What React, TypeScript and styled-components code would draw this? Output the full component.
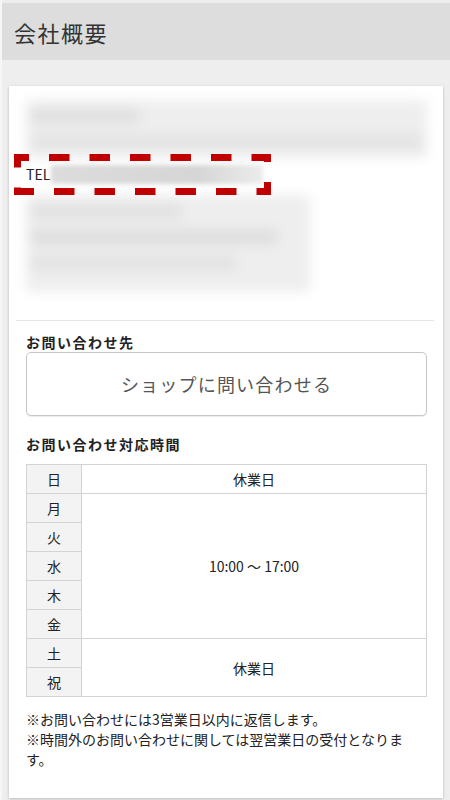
import React from "react";
import styled, { createGlobalStyle } from "styled-components";

const GlobalStyle = createGlobalStyle`
  html, body { margin: 0; padding: 0; background: #eeeeee; }
  body {
    font-family: "Noto Sans CJK JP", "Noto Sans", "Liberation Sans", sans-serif;
    color: #222;
    -webkit-font-smoothing: antialiased;
  }
`;

const Page = styled.div`
  width: 450px;
  min-height: 800px;
  background: #eeeeee;
  padding-top: 3px;
  box-sizing: border-box;
  border-left: 2px solid #f6f6f6;
`;

const Header = styled.header`
  height: 57px;
  background: #dddddd;
  display: flex;
  align-items: center;
  padding-left: 12px;
`;

const Title = styled.h1`
  margin: 0;
  font-size: 22px;
  font-weight: 400;
  letter-spacing: 1.5px;
  color: #333;
`;

const Card = styled.section`
  position: relative;
  margin: 26px 7px 0 7px;
  background: #fff;
  box-shadow: 0 1px 3px rgba(0, 0, 0, 0.22);
  padding: 14px 0 29px;
`;

const Inner = styled.div`
  padding: 0 16px 0 17px;
`;

const BlurBlock = styled.div<{ $h: number; $w?: number; $mt?: number }>`
  height: ${(p) => p.$h}px;
  width: ${(p) => (p.$w ? `${p.$w}px` : "100%")};
  margin-top: ${(p) => p.$mt ?? 0}px;
  background: #eeeeee;
  filter: blur(6px);
  display: flex;
  flex-direction: column;
  gap: 10px;
  padding: 8px 4px;
  box-sizing: border-box;
`;

const BlurBar = styled.div<{ $w: number; $shade: string }>`
  height: 16px;
  width: ${(p) => p.$w}%;
  background: ${(p) => p.$shade};
  border-radius: 6px;
`;

const TelRow = styled.div`
  display: flex;
  align-items: center;
  height: 22px;
  margin-top: 5px;
  font-size: 14px;
  color: #222;
`;

const TelBar = styled.div`
  width: 212px;
  height: 19px;
  margin-left: 1px;
  background: linear-gradient(90deg, #dcdcdc, #d6d6d6 70%, #ececec);
  filter: blur(2px);
`;

const Dashed = styled.svg`
  position: absolute;
  left: 5px;
  top: 68px;
  overflow: visible;
`;

const Divider = styled.hr`
  border: none;
  border-top: 1px solid #e6e6e6;
  margin: 28px 9px 11px 7px;
`;

const Heading = styled.h2`
  margin: 0;
  font-size: 14px;
  line-height: 20px;
  font-weight: 700;
  letter-spacing: 1.5px;
  color: #222;
`;

const ContactButton = styled.button`
  display: block;
  width: 100%;
  height: 64px;
  margin-bottom: 18px;
  background: #fff;
  border: 1px solid #c6c6c6;
  border-radius: 5px;
  box-shadow: 0 1px 1px rgba(0, 0, 0, 0.08);
  font-family: inherit;
  font-size: 18px;
  letter-spacing: 1.2px;
  color: #555;
  cursor: pointer;
`;

const HoursTable = styled.table`
  width: 100%;
  margin-top: 10px;
  border-collapse: collapse;
  font-size: 14px;
  color: #222;
`;

const DayCell = styled.th`
  width: 54px;
  height: 28px;
  padding: 0;
  background: #f3f3f3;
  border: 1px solid #d3d3d3;
  font-weight: 400;
  text-align: center;
`;

const TimeCell = styled.td`
  padding: 0;
  border: 1px solid #d3d3d3;
  text-align: center;
`;

const Notes = styled.p`
  margin: 12px 0 0;
  font-size: 14px;
  line-height: 20px;
  color: #222;
`;

type Row = { day: string; value?: string; span?: number };

const rows: Row[] = [
  { day: "日", value: "休業日", span: 1 },
  { day: "月", value: "10:00 〜 17:00", span: 5 },
  { day: "火" },
  { day: "水" },
  { day: "木" },
  { day: "金" },
  { day: "土", value: "休業日", span: 2 },
  { day: "祝" },
];

export default function App() {
  return (
    <>
      <GlobalStyle />
      <Page>
        <Header>
          <Title>会社概要</Title>
        </Header>
        <Card>
          <Inner>
            <BlurBlock $h={58}>
              <BlurBar $w={28} $shade="#e0e0e0" />
              <BlurBar $w={100} $shade="#e4e4e4" />
            </BlurBlock>
            <TelRow>
              TEL
              <TelBar />
            </TelRow>
            <BlurBlock $h={97} $w={284} $mt={10}>
              <BlurBar $w={55} $shade="#e2e2e2" />
              <BlurBar $w={90} $shade="#dfdfdf" />
              <BlurBar $w={75} $shade="#e3e3e3" />
            </BlurBlock>
          </Inner>
          <Dashed width={257} height={41} viewBox="0 0 257 41">
            <rect
              x={3.5}
              y={3.5}
              width={250}
              height={34}
              fill="none"
              stroke="#c00000"
              strokeWidth={7}
              strokeDasharray="20.5 20"
              strokeDashoffset={9}
            />
          </Dashed>
          <Divider />
          <Inner>
            <Heading>お問い合わせ先</Heading>
            <ContactButton type="button">ショップに問い合わせる</ContactButton>
            <Heading>お問い合わせ対応時間</Heading>
            <HoursTable>
              <tbody>
                {rows.map((r) => (
                  <tr key={r.day}>
                    <DayCell>{r.day}</DayCell>
                    {r.value && <TimeCell rowSpan={r.span}>{r.value}</TimeCell>}
                  </tr>
                ))}
              </tbody>
            </HoursTable>
            <Notes>
              ※お問い合わせには3営業日以内に返信します。
              <br />
              ※時間外のお問い合わせに関しては翌営業日の受付となります。
            </Notes>
          </Inner>
        </Card>
      </Page>
    </>
  );
}
